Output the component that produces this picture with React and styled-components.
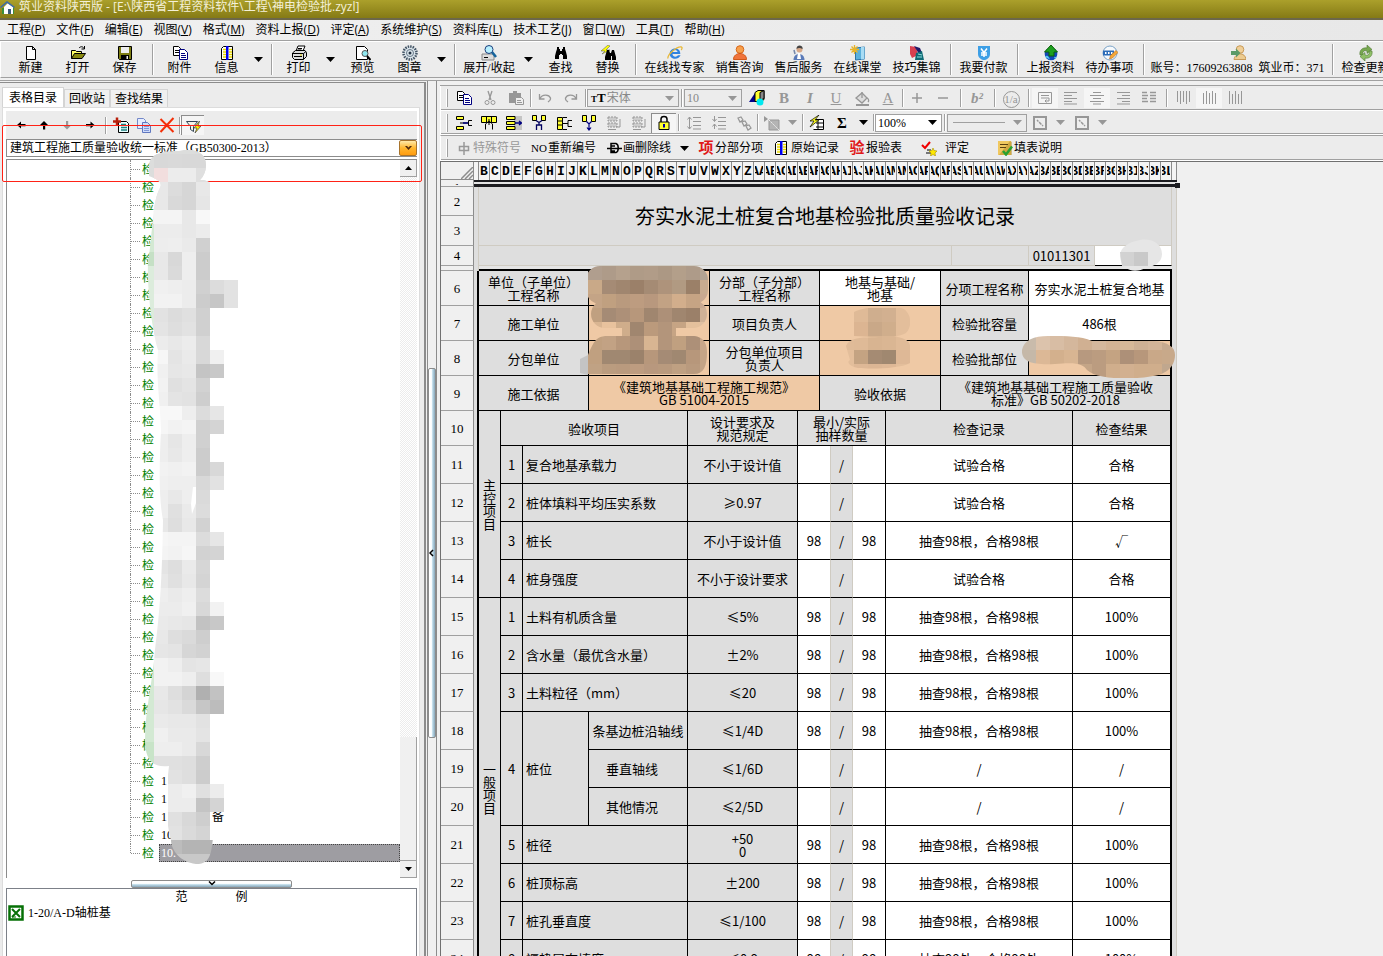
import React from 'react';
import styled, { createGlobalStyle } from 'styled-components';

const GRAY = '#979797';

/* ---------- icons ---------- */

const icons = {
    novo: <path d="M3.5 1.5h6l3 3v10h-9zM9.5 1.5v3h3" fill="#fff" stroke="#000" />,
    abrir: <><path d="M1.5 13.500V5.500h4l1 1h5v3" fill="#ffff66" stroke="#000" /><path d="M1.500 13.500l3-5h11l-3.500 5z" fill="#8a8a10" stroke="#000" /><path d="M9 3c2-2 4-1.500 5 0.500M14.500 1v3h-3" fill="none" stroke="#000" /></>,
    salvar: <><path d="M1.500 1.500h13v13h-12l-1-1z" fill="#7d7d12" stroke="#000" /><path d="M4 2h8v6H4z" fill="#eee" /><path d="M4 10h8v4H4z" fill="#000" /><path d="M9.500 11h1.500v3H9.500z" fill="#eee" /></>,
    anexo: <><path d="M1.500 1.500h5l2 2v7h-7z" fill="#fff" stroke="#000" /><path d="M3 5.500h4M3 7.500h4" stroke="#000" /><path d="M7.500 4.500h5l3 3v7h-8z" fill="#fff" stroke="#000080" /><path d="M9 8.500h4M9 10.500h5M9 12.500h5" stroke="#000080" /></>,
    info: <><path d="M2.500 3.500l2-2h3v13h-5zM8.500 1.500h5v13h-5z" fill="#fff" stroke="#000" /><path d="M4 4.500h3M4 7h3M4 9.500h3M4 12h3M10 4.500h3M10 7h3M10 9.500h3M10 12h3" stroke="#e8d800" strokeWidth="1.500" /><path d="M7 1h2.500v14H7z" fill="#0000f0" /></>,
    imprimir: <><path d="M5 6l2-5h7l-2 5z" fill="#fff" stroke="#000" /><path d="M7 3.500h4M6.500 5h4" stroke="#000" /><path d="M1.500 8l3-2.500h9.500l1.500 2v4l-3 3h-9l-2-2z" fill="#ddd" stroke="#000" /><path d="M1.500 8.500h11l2.500-2M12.500 8.500v6M3 11.500h8" fill="none" stroke="#000" /><path d="M9 10h2" stroke="#e0d000" /></>,
    visualizar: <><path d="M1.500 1.500h8l3 3v10h-11z" fill="#fff" stroke="#000" /><circle cx="10" cy="8.500" r="3" fill="#8fe8f0" stroke="#555" /><path d="M12 11l3.500 4" stroke="#000" strokeWidth="2" /></>,
    carimbo: <><circle cx="8" cy="8" r="6.500" fill="#dce6ec" stroke="#456" strokeWidth="2.500" strokeDasharray="1.500 1" /><circle cx="8" cy="8" r="3.500" fill="none" stroke="#678" /><circle cx="8" cy="8" r="1.500" fill="#234" /></>,
    expandir: <><path d="M1 9h12v6H1z" fill="#ddd" stroke="#888" /><path d="M3 12.500h4" stroke="#000" /><path d="M11 7l4 5" stroke="#14649c" strokeWidth="2.500" /><circle cx="8" cy="4.500" r="4" fill="#b8f0ff" stroke="#1a3f7c" /></>,
    binoculo: <path d="M4 2h2v2h1v2h2V4h1V2h2v2l1 3 1 4v3h-4v-4H9V9H7v1H6v4H2v-3l1-4 1-3z" fill="#000" />,
    trocar: <><path d="M8 0L1 6h4L2 9l8-4H6l4-4z" fill="#ffff00" stroke="#555" strokeWidth=".5" /><path d="M7 5h2l1 3h1l1-3h2l2 7v3h-4v-4h-1v4H5v-3z" fill="#000" /></>,
    ie: <><path d="M13 9H5.500c.2 3 4 3.500 5.500 1.300h2.600C11 16 2.500 14.500 2.700 8.500 3 2 13.500 1.500 13.300 9zM5.600 7h5c-.5-2.700-4.500-2.700-5 0z" fill="#2f83e0" /><path d="M1 13.500C0 10 10 1 14.500 2c1 .3.500 2-.3 3" fill="none" stroke="#e8b838" strokeWidth="1.300" /></>,
    pessoa: <><circle cx="8" cy="4.500" r="3.800" fill="#f7a04c" stroke="#d8681a" /><path d="M1.500 14.500c0-8 13-8 13 0z" fill="#f0743c" stroke="#d05818" /></>,
    atendente: <><path d="M2.500 15c0-8 11-8 11 0z" fill="#5a7ab8" /><path d="M7 8h2l1 6H6z" fill="#fff" /><circle cx="8.500" cy="4.500" r="3" fill="#d8a888" /><path d="M5.500 4c0-5 7-4 6 0-2-1-4-1.500-6 0z" fill="#444" /><path d="M3 5l1 4" stroke="#78a" strokeWidth="1.500" /></>,
    aula: <><path d="M5.500 3l9-1v12l-9 1z" fill="#5ab0dc" stroke="#2872a8" /><path d="M11 2l3.500 0v12l-3.500.5z" fill="#a8dcf4" /><path d="M4.500 0v9M0 4.500h9M1.500 1.500l6 6M7.500 1.500l-6 6" stroke="#e8b428" strokeWidth="1.300" /></>,
    dicas: <><path d="M1 1l6 1 2 8-6 3-2-4z" fill="#d84050" /><path d="M5 1l6 2 2 5-3 1z" fill="#221a68" /><path d="M7 8l6-2 2 9H6z" fill="#0f6a74" /><path d="M9 9l4 1M8 12h5" stroke="#8fe0e0" /></>,
    pagar: <><path d="M2 1h12v8c0 4-4 6-6 6s-6-2-6-6z" fill="#3d9fe6" /><path d="M5 3.500l3 4 3-4M8 7v5M5 8h6M5 10h6" stroke="#fff" strokeWidth="1.500" fill="none" /></>,
    enviar: <><circle cx="8" cy="9" r="6.300" fill="#1448b8" /><path d="M8 0l6.500 7H11v4H6V7H1.500z" fill="#1fa01f" stroke="#0a600a" /><path d="M2 12c2-3 4 0 5 2.500zM11 12h3l-2 2z" fill="#55c8f0" /></>,
    tarefas: <><circle cx="8" cy="8" r="7" fill="#f6f9fc" stroke="#7ca4c8" /><path d="M1 5.500h11v5H1z" fill="#2c6cb8" /><path d="M3 8h1.500M6 8h1.500M9 8h1.500" stroke="#fff" strokeWidth="2" /><path d="M7.500 14l1-3.500 5.500-5 2 2-5.500 5.500z" fill="#f4a838" stroke="#b86818" strokeWidth=".6" /></>,
    conta: <><circle cx="10" cy="4.500" r="3.800" fill="#f0cf98" stroke="#c89a58" /><path d="M4 14.500c1-7 11-8 12 0z" fill="#eccb90" stroke="#c89a58" /><path d="M1 6h5V3.500L10.500 8 6 12.500V10H1z" fill="#5a9a68" /></>,
    atualizar: <><path d="M2 10C1 5 5 2 9 3V0l5 4.500-5 4V6C6 5 4 7 5 10z" fill="#78a850" stroke="#527a38" strokeWidth=".6" /><path d="M14 6c1 5-3 8-7 7v3l-5-4.500 5-4V10c3 1 5-1 4-4z" fill="#90c068" stroke="#527a38" strokeWidth=".6" /></>,

    esquerda: <path d="M4 8l4-3.500V7h4.500v2.200H8v2.300z" fill="#000" />,
    cima: <path d="M8 4l4 4H9.200v4.500H7V8H4z" fill="#000" />,
    baixo: <path d="M8 12.500l4-4H9.200V4H7v4.500H4z" fill="#999" />,
    direita: <path d="M12.500 8l-4-3.500V7H4v2.200h4.500v2.300z" fill="#000" />,
    adicionar: <><path d="M5.500 4.500h8l2 2v9h-10z" fill="#e8ffff" stroke="#000" /><path d="M8 7.500h5M8 10.500h6M8 13h6" stroke="#208080" strokeWidth="1.300" /><path d="M4 .5v8M0 4.500h8" stroke="#b8200c" strokeWidth="2.500" /></>,
    copiarAzul: <><path d="M1.500 1.500h6l2 2v8h-8z" fill="#e4ecff" stroke="#7488c8" /><path d="M6.500 5.500h5l3 3v7h-8z" fill="#d0dcfa" stroke="#6078c0" /><path d="M8 9.500h5M8 11.500h5M8 13.500h5" stroke="#8098d8" /></>,
    excluir: <path d="M1.500 2l13 13M14.500 1L1.500 15" stroke="#f43008" strokeWidth="2" />,
    filtro: <><path d="M1.500 3.500h11l-4 5v5l-3-2v-3z" fill="#f4f4e8" stroke="#345" /><path d="M14.500 3L9 10h3l-2 5 6-7h-3z" fill="#ffee00" stroke="#444" strokeWidth=".7" /></>,
    excel: <><path d="M1.500 1.500h13v13h-13z" fill="#fff" stroke="#067006" strokeWidth="2.500" /><path d="M4 4l8 8M12 4l-8 8" stroke="#067006" strokeWidth="2" /><path d="M4 12h4" stroke="#067006" /></>,

    recortar: <><path d="M6 1l3 9M10 1L7 10" stroke={GRAY} strokeWidth="1.300" /><circle cx="5" cy="12.500" r="2" fill="none" stroke={GRAY} /><circle cx="11" cy="12.500" r="2" fill="none" stroke={GRAY} /></>,
    colar: <><path d="M1 3h12v10H1z" fill={GRAY} /><path d="M5 1h4v3H5z" fill={GRAY} /><path d="M7.500 7.500h6l2 2v5h-8z" fill="#eee" stroke={GRAY} /><path d="M9 10.500h4M9 12.500h5" stroke={GRAY} /></>,
    desfazer: <path d="M2.500 4v5h5M3 8.500C5 4 12 4 13.500 8c.3 1.500-1 3-2.500 4" fill="none" stroke={GRAY} strokeWidth="1.300" />,
    refazer: <path d="M13.500 4v5h-5M13 8.500C11 4 4 4 2.500 8c-.3 1.500 1 3 2.500 4" fill="none" stroke={GRAY} strokeWidth="1.300" />,
    formas: <><path d="M0 12l6-9 2 9z" fill="#00008b" /><path d="M6 2.500l3-2h6v9l-3 2H6z" fill="#ffff30" stroke="#000" /><path d="M11 2.500v8l4-2V.5z" fill="#888" stroke="#000" /><circle cx="11" cy="12" r="3.500" fill="#00e8f0" /></>,
    balde: <><path d="M2 8l6-5 5 5-5 5z" fill="#ddd" stroke={GRAY} strokeWidth="1.300" /><path d="M8 2v6M13 8c2 1 2 3 1 4" fill="none" stroke={GRAY} strokeWidth="1.300" /><path d="M2 15h13" stroke={GRAY} strokeWidth="2" /></>,
    mais: <path d="M3 8h10M8 3v10" stroke={GRAY} strokeWidth="1.500" />,
    menos: <path d="M3 8h10" stroke={GRAY} strokeWidth="1.500" />,
    quebra: <path d="M1.500 2.500h13v11h-13zM4 5.500h8M4 8h8v3H8M9.500 9.500L8 11l1.500 1.500" fill="none" stroke={GRAY} />,
    alinharEsq: <path d="M1 2.500h13M1 5.500h8M1 8.500h13M1 11.500h8M1 14h13" stroke={GRAY} />,
    alinharCentro: <path d="M4 2.500h8M1 5.500h14M4 8.500h8M1 11.500h14M4 14h8" stroke={GRAY} />,
    alinharDir: <path d="M2 2.500h13M7 5.500h8M2 8.500h13M7 11.500h8M2 14h13" stroke={GRAY} />,
    distribuir: <path d="M1 2.500h5M9 2.500h6M1 5.500h6M9 5.500h6M1 8.500h5M9 8.500h6M1 11.500h6M9 11.500h6" stroke={GRAY} strokeWidth="1.500" />,
    barras: <path d="M2.500 1v11M5.500 1v13M8.500 1v11M11.500 1v13M14.500 1v11" stroke={GRAY} />,
    barrasMeio: <path d="M2.500 3v11M5.500 1v13M8.500 3v11M11.500 1v13M14.500 3v11" stroke={GRAY} />,
    barrasBaixo: <path d="M2.500 1v13M5.500 4v10M8.500 1v13M11.500 4v10M14.500 1v13" stroke={GRAY} />,

    linhaInserir: <><path d="M.5 1.500h7v3h-7zM.5 11.500h7v3h-7z" fill="#ffff30" stroke="#000" /><path d="M4 8h8M16 5.500h-3.500v5H16" fill="none" stroke="#000" /><path d="M7 8h5" stroke="#000080" strokeWidth="1.500" /></>,
    tabelaInserir: <><path d="M.5 1.500h15v6H.5z" fill="#ffff30" stroke="#000" /><path d="M5.500 1.500v6M10.500 1.500v6M8 4v6M4.500 14.500V9L8 6l3.500 3v5.500" fill="none" stroke="#000" /></>,
    linhaAdd: <><path d="M8 1h8v14H8z" fill="#c4c4c4" /><path d="M.5 1.500H9v3H.5zM.5 6.500H9v3H.5zM.5 11.500H9v3H.5z" fill="#ffff30" stroke="#000" /><path d="M9 8h6M13 6l2.500 2L13 10" fill="none" stroke="#000080" strokeWidth="1.300" /></>,
    colInserir: <><path d="M1.500.5h4v5h-4zM10.500.5h4v5h-4z" fill="#ffff30" stroke="#000" /><path d="M5 5.500l3 2 3-2M5.500 15v-5h5v5M8 7v3" fill="none" stroke="#000060" strokeWidth="1.300" /></>,
    colTabela: <><path d="M1.500 2.500h5v12h-5z" fill="#ffff30" stroke="#000" /><path d="M1.500 6h5M1.500 10h5M7 8.500h5M16 5.500h-4v6h4M7 2.500h4M7 14.500h4" fill="none" stroke="#000" /></>,
    colAdd: <><path d="M1.500.5h4v6h-4zM10.500.5h4v6h-4z" fill="#ffff30" stroke="#000" /><path d="M5.500 6.500L8 9l2.500-2.500M8 9v6M6 12.500L8 15l2-2.500" fill="none" stroke="#000080" strokeWidth="1.200" /></>,
    linhaDel: <><path d="M2 2h9v4H2zM2 8h9v4H2z" fill="#ccc" stroke={GRAY} strokeDasharray="2 1" /><path d="M14 4v8h-4M2 14.500h8" fill="none" stroke={GRAY} /></>,
    cadeado: <><path d="M5 7V4c0-3.500 6-3.500 6 0v3" fill="none" stroke="#000" strokeWidth="1.500" /><path d="M3 7h10v7.500H3z" fill="#ffff30" stroke="#000" /><path d="M7 9h2v3.500H7z" fill="#0000a0" /></>,
    espacoMais: <path d="M7 2.500h8M7 6.500h8M7 10.500h8M7 14h8M3.500 2v12M1.500 4.500l2-2.500 2 2.500M1.500 11.500l2 2.500 2-2.500" fill="none" stroke={GRAY} />,
    espacoMenos: <path d="M7 2.500h8M7 6.500h8M7 10.500h8M7 14h8M3.500 1v5M3.500 9v5M1.500 4l2 2.500L5.500 4M1.500 11.500l2-2.500 2 2.500" fill="none" stroke={GRAY} />,
    corrente: <path d="M2 3l3-1 2 3-3 2zM6 7l3-1 2 3-3 2zM10 11l3-1 2 3-3 2z" fill="none" stroke={GRAY} strokeWidth="1.200" />,
    padrao: <><path d="M0 1l4 3-4 3z" fill={GRAY} /><path d="M5 5h10v10H5z" fill="#b4b4b4" stroke={GRAY} /><path d="M5 5l10 10" stroke="#eee" strokeDasharray="2 1" /></>,
    formulario: <><path d="M6.500 4.500h8v10h-10" fill="#fff" stroke="#000" /><path d="M8 7h2v2H8zM8 11h2v2H8zM11 8h3M11 12h3" fill="none" stroke="#000" /><path d="M10 0L1 6h4l-4 6 9-7H6z" fill="#ffff20" stroke="#000" strokeWidth=".7" /></>,
    quadro: <><path d="M2 2h12v12H2z" fill="#eee" stroke={GRAY} strokeWidth="2" /><path d="M5 5l3 3M8 8l3 3" stroke={GRAY} strokeWidth="1.500" strokeDasharray="2 1" /></>,
    simbolo: <path d="M8 2v13M3.500 6.500h9v4h-9z" fill="none" stroke="#999" strokeWidth="1.500" />,
    riscar: <path d="M1 8.500h15M5 3.500h5c3 1 3 8 0 9H5zM5 6h4M5 11h4" fill="none" stroke="#000" strokeWidth="1.500" />,
    avaliar: <><path d="M1 5l3 3 5-6" fill="none" stroke="#f00000" strokeWidth="2" /><path d="M6 10h4M5 13h5" stroke="#000" /><path d="M12 8l1 2.500 3 .5-2 2 .5 3-2.500-1.500L9.500 16l.5-3-2-2 3-.5z" fill="#ffe800" stroke="#a89000" strokeWidth=".6" /></>,
    explicacao: <><path d="M1 1h13v14H1z" fill="#f0c860" /><path d="M13 1l2 1v13H2z" fill="#b08820" opacity=".5" /><path d="M3 4.500h8M3 7.500h6" stroke="#5a4010" /><path d="M6 11l3 3.500 6-8" fill="none" stroke="#28a030" strokeWidth="2.500" /></>,
    casa: <><path d="M2 8h12v6H2z" fill="#3a9038" /><path d="M4 7l4-4 5 4v7H4z" fill="#fff" /><path d="M0 7l7-6 8 6-1 1-7-5-6 5z" fill="#3c6ca8" /><path d="M8 9h3v5H8z" fill="#3a5a78" /></>,
};

const Icon = ({ name, size = 16 }) => (
    <svg width={size} height={size} viewBox="0 0 16 16" aria-hidden="true">{icons[name]}</svg>
);

const Seta = ({ color = '#000' }) => (
    <svg width="9" height="5" viewBox="0 0 9 5" aria-hidden="true"><path d="M0 0h9L4.500 5z" fill={color} /></svg>
);

/* ---------- data ---------- */

const menus = [['工程', 'P'], ['文件', 'F'], ['编辑', 'E'], ['视图', 'V'], ['格式', 'M'], ['资料上报', 'D'], ['评定', 'A'], ['系统维护', 'S'], ['资料库', 'L'], ['技术工艺', 'J'], ['窗口', 'W'], ['工具', 'T'], ['帮助', 'H']];

const principal = [
    ['novo', '新建', 47], ['abrir', '打开', 47], ['salvar', '保存', 47], '|',
    ['anexo', '附件', 47], ['info', '信息', 47], 'v', '|',
    ['imprimir', '打印', 47], 'v', ['visualizar', '预览', 47], ['carimbo', '图章', 47], 'v', '|',
    ['expandir', '展开/收起', 62], 'v', ['binoculo', '查找', 47], ['trocar', '替换', 47], '|',
    ['ie', '在线找专家', 71], ['pessoa', '销售咨询', 59], ['atendente', '售后服务', 59], ['aula', '在线课堂', 59], ['dicas', '技巧集锦', 59], '|',
    ['pagar', '我要付款', 59], '|',
    ['enviar', '上报资料', 59], ['tarefas', '待办事项', 59], '|',
    ['conta', '账号：17609263808  筑业币：371', 181], '|',
    ['atualizar', '检查更新', 59],
];

const colunas = Array.from({ length: 63 }, (_, i) => {
    const n = i + 1;
    return n < 26 ? String.fromCharCode(65 + n) : String.fromCharCode(64 + Math.floor(n / 26)) + String.fromCharCode(65 + (n % 26));
});

const CINZA = '#dedede';
const LARANJA = '#efc9a5';
const BRANCO = '#fff';

const c = (t, span, bg = CINZA, extra = {}) => ({ t, span, bg, ...extra });
const amostra = (v) => [
    c(v, 3, BRANCO, { right: 'tan' }),
    c('/', 2, CINZA, { right: 'tan' }),
    c(v, 3, BRANCO),
];
const item = (n, h, numero, nome, req, v, registro, resultado, antes = []) => ({
    n, h,
    cells: [...antes, c(numero, 2), c(nome, 15, CINZA, { left: true }), c(req, 10), ...amostra(v), c(registro, 17, BRANCO), c(resultado, 9, BRANCO)],
});
const REG = '抽查98根，合格98根';

const linhas = [
    { n: 6, h: 35, cells: [c('单位（子单位）\n工程名称', 10), c('', 11, LARANJA), c('分部（子分部）\n工程名称', 10), c('地基与基础/\n地基', 11, BRANCO), c('分项工程名称', 8), c('夯实水泥土桩复合地基', 13, BRANCO)] },
    { n: 7, h: 35, cells: [c('施工单位', 10), c('', 11, LARANJA), c('项目负责人', 10), c('', 11, LARANJA), c('检验批容量', 8), c('486根', 13, BRANCO)] },
    { n: 8, h: 35, cells: [c('分包单位', 10), c('', 11, LARANJA), c('分包单位项目\n负责人', 10), c('', 11, LARANJA), c('检验批部位', 8), c('', 13, LARANJA)] },
    { n: 9, h: 35, cells: [c('施工依据', 10), c('《建筑地基基础工程施工规范》\nGB 51004-2015', 21, LARANJA), c('验收依据', 11), c('《建筑地基基础工程施工质量验收\n标准》GB 50202-2018', 21)] },
    { n: 10, h: 35, cells: [c('主\n控\n项\n目', 2, CINZA, { rows: 5 }), c('验收项目', 17), c('设计要求及\n规范规定', 10), c('最小/实际\n抽样数量', 8), c('检查记录', 17), c('检查结果', 9)] },
    item(11, 38, '1', '复合地基承载力', '不小于设计值', '', '试验合格', '合格'),
    item(12, 38, '2', '桩体填料平均压实系数', '≥0.97', '', '试验合格', '合格'),
    item(13, 38, '3', '桩长', '不小于设计值', '98', REG, '√'),
    item(14, 38, '4', '桩身强度', '不小于设计要求', '', '试验合格', '合格'),
    item(15, 38, '1', '土料有机质含量', '≤5%', '98', REG, '100%', [c('一\n般\n项\n目', 2, CINZA, { rows: 10 })]),
    item(16, 38, '2', '含水量（最优含水量）', '±2%', '98', REG, '100%'),
    item(17, 38, '3', '土料粒径（mm）', '≤20', '98', REG, '100%'),
    { n: 18, h: 38, cells: [c('4', 2, CINZA, { rows: 3 }), c('桩位', 6, CINZA, { rows: 3, left: true }), c('条基边桩沿轴线', 9), c('≤1/4D', 10), ...amostra('98'), c(REG, 17, BRANCO), c('100%', 9, BRANCO)] },
    { n: 19, h: 38, cells: [c('垂直轴线', 9, CINZA, { recuo: true }), c('≤1/6D', 10), ...amostra(''), c('/', 17, BRANCO), c('/', 9, BRANCO)] },
    { n: 20, h: 38, cells: [c('其他情况', 9, CINZA, { recuo: true }), c('≤2/5D', 10), ...amostra(''), c('/', 17, BRANCO), c('/', 9, BRANCO)] },
    item(21, 38, '5', '桩径', '+50\n0', '98', REG, '100%'),
    item(22, 38, '6', '桩顶标高', '±200', '98', REG, '100%'),
    item(23, 38, '7', '桩孔垂直度', '≤1/100', '98', REG, '100%'),
    item(24, 38, '8', '褥垫层夯填度', '≤0.9', '98', '抽查98处，合格98处', '100%'),
];

const arvore = Array.from({ length: 39 }, (_, i) => {
    if (i < 34) return '';
    return ['1', '1', '1               备', '10', '10.'][i - 34];
});

// tons de cinza dos blocos da máscara, 14px cada, a partir de x=154 y=154
const blocosArvore = [
    'd8d9d8d8', 'efececdfe2', 'e8dcd6e8', 'e8d9d6e6', 'f4f4e8f8', 'ececE8ec', 'edeeead0', 'e8d8eecc', 'e8daeecc',
    'f0eeecd0dce2', 'f2f2ecccc6e2', 'e2dce0d0', 'e4dee2d0', 'ece8ecd8', 'f6e4ead8f0', 'f0e6e8c4c8',
    'f2e0e4d2', 'f0e4e2ce', 'f8f8eedce6', 'f6f2f4d0d4', 'eee6eed0', 'eee8eecc', 'f2f0f2ccd8', 'f0eeeed8e2',
    'eee8eeda', 'eee0eadc', 'e8dee8d2', 'f6f4f4dce6', 'f4f2f6d2d4', 'e4deead6', 'e8e0e8d4', 'eeeaeedc',
    'ececf0d8f2', 'eae8e6c2c8', 'e8dedace', 'e6e4d6d2', 'f2eee4e6', 'f2f2eedef8', 'e8ded4b0c2', 'e6e2dac6bc',
    'eae8e8e2', 'f0eaeae4', 'eeeeead8', 'e0e0dece', 'ffe2decc', 'ffecf0e0ec', 'ffececc4d4', 'ffe0d8ceff', 'ffe2dad4', 'ffbcb4b4b4', 'ffc8c8c8c8',
];

const blocosFolha = [
    [588, 266, ['b09e8e', 'ae9b89', 'b5a18d', 'af9b87', 'b19c88', 'ac9884', 'b39f8a', 'ae9b89', 'b3a392']],
    [588, 280, ['c9a988', 'a58b75', 'a0866f', '9b8069', 'a58b74', 'ae937b', 'b19a82', '9b8068', 'c8ab90']],
    [588, 294, ['c4a486', 'c0a080', 'b99a7e', 'bd9c80', 'b8987e', 'c2a284', 'd2ae8c', 'c6a484', 'c8a890']],
    [588, 308, ['c0a080', 'a58b75', 'ad9078', 'b7977b', 'a0866f', 'ad9078', 'a0866f', '9b8069', 'cfb196']],
    [588, 322, ['d9b592', 'e8c29d', 'cfad8b', 'a0866f', 'bb9a7c', 'b3957b', 'c6a484', 'e4c09c', 'dfc0a2']],
    [588, 336, ['c0a080', 'c2a284', 'b7977b', 'ad9078', 'd8b592', 'b3957b', 'c0a080', 'ad9078', 'c8a68a']],
    [588, 350, ['c0a080', 'a08871', 'a08871', '9b826b', 'b7977b', 'a58b75', 'a08871', 'b7977b', 'c4a486']],
    [588, 364, ['c0a284', 'ba9c7f', 'b99a7e', 'bd9c80', 'b8987e', 'b99a7e', 'bfa082', 'b99a7e', 'c4a486']],
    [840, 308, ['e6c19d', 'dfba97', 'cfae8e', 'd2b090', 'e3be9b']],
    [840, 322, ['e6c19d', 'dcb592', 'c9a888', 'd0ae8c', 'e3be9b']],
    [840, 336, ['e0bb98', 'dfba97', 'd8b491', 'dab693', 'e0bb98']],
    [840, 350, ['e3be9b', 'c4a382', 'a58b73', 'a08870', 'deb896']],
    [840, 364, ['e3be9b', 'deb896', 'dcb694', 'deb896', 'e3be9b']],
    [1022, 336, ['c9bbab', 'dcc3ac', 'd8bda4', 'd4b79c', 'd0b092', 'd4b79c', 'd2b294', 'd6b898', 'cdb094', 'd2b498', 'c6aa90']],
    [1022, 350, ['c5b8a8', 'dcb896', 'd3b08d', 'd8b592', 'b7997f', 'bb9c80', 'c4a382', 'ad9078', 'b7977b', 'c9a888', 'c8a98a']],
    [1022, 364, ['c9bbab', 'dcb896', 'd3b08d', 'd8b592', 'c4a587', 'bb9c80', 'd0ae8c', 'd2b090', 'd0ae8c', 'd0ae8c', 'c0a78e']],
];

/* ---------- parts ---------- */

function MascaraArvore() {
    return (
        <CamadaArvore width="100" height="716" viewBox="140 150 100 716" aria-hidden="true">
            <clipPath id="contornoArvore">
                <path d="M149 165c1-12 15-14 30-14 14-4 27 1 27 14 0 7-3 12-6 15 6 0 10 2 10 4H240V830H214L212 846C210 862 204 864 196 864 180 862 171 850 171 840 165 820 166 790 169 766 155 768 145 762 145 740 145 710 153 680 155 650 160 610 162 580 163 520 159 500 159 470 161 430 160 400 156 380 158 350 152 330 147 290 148 262 153 235 152 205 159 190 164 182 158 180 149 176 149 165z" />
            </clipPath>
            <g clipPath="url(#contornoArvore)">
                <rect x="140" y="150" width="70" height="60" fill="#dcdddc" />
                <rect x="140" y="182" width="70" height="30" fill="#ececec" />
                <rect x="140" y="210" width="14" height="40" fill="#f0f0f0" />
                <rect x="140" y="224" width="14" height="42" fill="#d3e9d3" />
                <rect x="140" y="252" width="14" height="14" fill="#c5e0c5" />
                <rect x="140" y="266" width="14" height="64" fill="#dcecdc" />
                <rect x="140" y="660" width="14" height="82" fill="#d3e9d3" />
                <rect x="140" y="742" width="14" height="30" fill="#c8e4c8" />
                {blocosArvore.map((linha, y) => linha.match(/../g).map((tom, x) => (
                    tom !== 'ff' && <rect key={`${x}-${y}`} x={154 + x * 14} y={154 + y * 14} width="14" height="14" fill={`#${tom}${tom}${tom}`} />
                )))}
                <rect x="154" y="168" width="14" height="14" fill="#f2dede" />
                <path d="M193 487h3v16l-4 11-1-10z" fill="#fff" />
            </g>
        </CamadaArvore>
    );
}

function MascaraFolha() {
    return (
        <CamadaFolha width="600" height="144" viewBox="580 236 600 144" aria-hidden="true">
            <clipPath id="contornoFolha">
                <rect x="586" y="266" width="122" height="38" rx="14" />
                <rect x="591" y="300" width="116" height="28" rx="14" />
                <rect x="622" y="318" width="54" height="22" />
                <path d="M588 374c-4-8-2-16 4-28 4-8 8-10 16-10h84c12 0 15 8 15 16 0 14-3 22-13 22z" />
                <path d="M854 312c10-6 40-8 50-3 8 6 8 18 2 24-10 6-30 4-52 3z" />
                <path d="M846 346c4-10 20-8 34-9 16-2 28 1 30 8l2 4-2 14c-10 6-40 6-52 5-8-1-12-6-8-8z" />
                <path d="M1022 350c2-10 12-14 26-14 20 0 32 0 44 5h62c14 1 21 6 21 14 0 12-10 20-22 21-18 4-56 4-66-6-4-6-10-8-32-6-20 1-34-1-33-14z" />
            </clipPath>
            <path d="M578 360l10-5v20l-8-2z" fill="#c4c4c4" />
            <g clipPath="url(#contornoFolha)">
                {blocosFolha.map(([x0, y, cores]) => cores.map((cor, i) => (
                    <rect key={`${x0}-${y}-${i}`} x={x0 + i * 14} y={y} width="14" height="14" fill={`#${cor}`} />
                )))}
            </g>
            <path d="M1120 256c0-9 9-14 20-16 12-2 22 4 22 14 0 9-8 12-16 14-10 5-25 4-26-12z" fill="#e6e6e6" />
            <path d="M1120 252h14v14h-12z" fill="#d2d2d2" />
            <path d="M1134 252h14v14h-14z" fill="#c9c9c9" />
        </CamadaFolha>
    );
}

function BarraPrincipal() {
    return (
        <PrincipalBar>
            {principal.map((b, i) => {
                if (b === '|') return <Divisor key={i} $h={31} />;
                if (b === 'v') return <SetaButton key={i} aria-label="更多"><Seta /></SetaButton>;
                return <PrincipalButton key={i} $w={b[2]}><Icon name={b[0]} />{b[1]}</PrincipalButton>;
            })}
        </PrincipalBar>
    );
}

const Botoes = ({ nomes, w = 26, marcados = [] }) => nomes.map((n) => (
    <FerramentaButton key={n} $w={w} $marcado={marcados.includes(n)} aria-label={n}><Icon name={n} /></FerramentaButton>
));

function Ferramentas() {
    return (
        <>
            <FerramentasRow $h={25}>
                <Alca />
                <Botoes nomes={['anexo', 'recortar', 'colar']} />
                <Divisor $h={18} $m={1} />
                <Botoes nomes={['desfazer', 'refazer']} />
                <Divisor $h={18} $m={1} />
                <Combo $w={92} $off>
                    <TT><b>T</b><b>T</b></TT>
                    <select aria-label="字体" disabled><option>宋体</option></select>
                    <Seta color={GRAY} />
                </Combo>
                <Divisor $h={18} $m={2} />
                <Combo $w={58} $off>
                    <select aria-label="字号" disabled><option>10</option></select>
                    <Seta color={GRAY} />
                </Combo>
                <Botoes nomes={['formas']} w={29} />
                <LetraButton><b>B</b></LetraButton>
                <LetraButton><i><b>I</b></i></LetraButton>
                <LetraButton><u>U</u></LetraButton>
                <Botoes nomes={['balde']} />
                <LetraButton><u>A</u></LetraButton>
                <Divisor $h={18} $m={1} />
                <Botoes nomes={['mais', 'menos']} />
                <Divisor $h={18} />
                <LetraButton><i><b>b²</b></i></LetraButton>
                <Divisor $h={18} />
                <LetraButton><Redondo>1/a</Redondo></LetraButton>
                <Divisor $h={18} />
                <Botoes nomes={['quebra', 'alinharEsq', 'alinharCentro', 'alinharDir', 'distribuir']} marcados={['quebra', 'alinharCentro']} />
                <Divisor $h={18} />
                <Botoes nomes={['barras', 'barrasMeio', 'barrasBaixo']} marcados={['barrasMeio']} />
            </FerramentasRow>
            <FerramentasRow $h={24}>
                <Alca />
                <Botoes w={25} nomes={['linhaInserir', 'tabelaInserir', 'linhaAdd', 'colInserir', 'colTabela', 'colAdd']} />
                <FerramentaButton $w={25} aria-label="删除行"><Icon name="linhaDel" /></FerramentaButton>
                <FerramentaButton $w={25} aria-label="删除列"><Icon name="linhaDel" /></FerramentaButton>
                <FerramentaButton $w={25} $preso aria-label="锁定"><Icon name="cadeado" /></FerramentaButton>
                <Divisor $h={17} $m={2} />
                <Botoes w={25} nomes={['espacoMais', 'espacoMenos', 'corrente']} />
                <Divisor $h={17} $m={1} />
                <Botoes w={25} nomes={['padrao']} />
                <SetaButton aria-label="图案"><Seta color={GRAY} /></SetaButton>
                <Divisor $h={17} $m={1} />
                <Botoes w={25} nomes={['formulario']} />
                <LetraButton $preto><b>Σ</b></LetraButton>
                <SetaButton aria-label="求和"><Seta /></SetaButton>
                <Divisor $h={17} $m={1} />
                <Combo $w={67}>
                    <select aria-label="缩放"><option>100%</option></select>
                    <Seta />
                </Combo>
                <Divisor $h={17} $m={2} />
                <Combo $w={80} $off>
                    <Traco />
                    <Seta color={GRAY} />
                </Combo>
                <Botoes w={25} nomes={['quadro']} />
                <SetaButton aria-label="边框"><Seta color={GRAY} /></SetaButton>
                <Botoes w={25} nomes={['quadro']} />
                <SetaButton aria-label="斜线"><Seta color={GRAY} /></SetaButton>
            </FerramentasRow>
            <FerramentasRow $h={26} $topo>
                <Alca />
                <TextoButton $off><Icon name="simbolo" />特殊符号</TextoButton>
                <TextoButton><NoMark>NO</NoMark>重新编号</TextoButton>
                <TextoButton><Icon name="riscar" />画删除线</TextoButton>
                <SetaButton aria-label="删除线样式"><Seta /></SetaButton>
                <TextoButton><Vermelho>项</Vermelho>分部分项</TextoButton>
                <TextoButton $gap={2}><Icon name="info" />原始记录</TextoButton>
                <TextoButton><Vermelho>验</Vermelho>报验表</TextoButton>
                <TextoButton $gap={8} $pad={14}><Icon name="avaliar" />评定</TextoButton>
                <TextoButton $pad={14}><Icon name="explicacao" />填表说明</TextoButton>
            </FerramentasRow>
        </>
    );
}

function PainelEsquerdo() {
    return (
        <Esquerda>
            <Abas role="tablist">
                <Aba role="tab" $ativa>表格目录</Aba>
                <Aba role="tab">回收站</Aba>
                <Aba role="tab">查找结果</Aba>
            </Abas>
            <Corpo>
                <BarraArvore>
                    <Botoes w={23} nomes={['esquerda', 'cima', 'baixo', 'direita']} />
                    <Divisor $h={17} />
                    <Botoes w={23} nomes={['adicionar', 'copiarAzul', 'excluir']} />
                    <Divisor $h={17} $m={1} />
                    <FerramentaButton $w={23} $preso aria-label="筛选"><Icon name="filtro" /></FerramentaButton>
                </BarraArvore>
                <Norma>
                    <select aria-label="标准"><option>建筑工程施工质量验收统一标准（GB50300-2013）</option></select>
                    <NormaSeta aria-hidden="true">
                        <svg width="7" height="4" viewBox="0 0 7 4"><path d="M0 0h2l1.500 1.500L5 0h2L3.500 4z" fill="#50280a" /></svg>
                    </NormaSeta>
                </Norma>
                <Lista>
                    <Nos>
                        {arvore.map((texto, i) => (
                            <No key={i}>
                                <Ramo $ultimo={i === arvore.length - 1} />
                                <Marca>检</Marca>
                                <Rotulo $sel={i === arvore.length - 1}>{texto}</Rotulo>
                            </No>
                        ))}
                    </Nos>
                    <Rolagem>
                        <RolagemButton aria-label="向上"><svg width="7" height="4" viewBox="0 0 7 4"><path d="M0 4h7L3.500 0z" /></svg></RolagemButton>
                        <RolagemThumb />
                        <RolagemButton aria-label="向下"><svg width="7" height="4" viewBox="0 0 7 4"><path d="M0 0h7L3.500 4z" /></svg></RolagemButton>
                    </Rolagem>
                </Lista>
                <DivisorHorizontal>
                    <button aria-label="折叠范例"><svg width="8" height="5" viewBox="0 0 8 5"><path d="M1 .5l3 3 3-3" fill="none" stroke="#000" strokeWidth="1.500" /></svg></button>
                </DivisorHorizontal>
                <Exemplos>
                    <ExemplosTitulo><span>范</span><span>例</span></ExemplosTitulo>
                    <Exemplo><Icon name="excel" />1-20/A-D轴桩基</Exemplo>
                </Exemplos>
            </Corpo>
            <Destaque />
            <MascaraArvore />
        </Esquerda>
    );
}

function Planilha() {
    return (
        <FolhaArea>
            <Folha>
                <colgroup>
                    <col width="33" />
                    <col width="5" />
                    {colunas.map((n) => <col key={n} width="11" />)}
                    <col width="5" />
                </colgroup>
                <thead>
                    <Linha $h={18}>
                        <Canto>
                            <svg width="12" height="12" viewBox="0 0 12 12" aria-hidden="true"><path d="M0 12L12 0M4 12l8-8M8 12l4-4" stroke="#8c8c8c" strokeWidth="1.500" /></svg>
                        </Canto>
                        <ColHead />
                        {colunas.map((n) => <ColHead key={n}><span>{n}</span></ColHead>)}
                        <ColHead />
                    </Linha>
                </thead>
                <tbody>
                    <Linha $h={7}>
                        <RowHead><Recorte $h={4}>1</Recorte></RowHead>
                        <Selecao colSpan={65}><Puxador /></Selecao>
                    </Linha>
                    <Linha $h={29}>
                        <RowHead>2</RowHead>
                        <Borda $tan />
                        <Titulo colSpan={63} rowSpan={2}>夯实水泥土桩复合地基检验批质量验收记录</Titulo>
                        <Borda $tan />
                    </Linha>
                    <Linha $h={30}>
                        <RowHead>3</RowHead>
                        <Borda $tan />
                        <Borda $tan />
                    </Linha>
                    <Linha $h={20}>
                        <RowHead>4</RowHead>
                        <Borda $tan />
                        <Celula colSpan={43} $bg={CINZA} $right="tan" $bottom="tan" />
                        <Celula colSpan={7} $bg={CINZA} $right="tan" $bottom="tan" />
                        <Celula colSpan={6} $bg={CINZA} $right="tan" $bottom="tan">01011301</Celula>
                        <Celula colSpan={7} $bg={BRANCO} $right="tan" />
                        <Borda $tan />
                    </Linha>
                    <Linha $h={5}>
                        <RowHead><Recorte $h={3}>5</Recorte></RowHead>
                        <Borda $tan />
                        <Topo colSpan={63} />
                        <Borda $tan />
                    </Linha>
                    {linhas.map((l) => (
                        <Linha key={l.n} $h={l.h}>
                            <RowHead>{l.n}</RowHead>
                            <Borda />
                            {l.cells.map((x, i) => (
                                <Celula
                                    key={i}
                                    colSpan={x.span}
                                    rowSpan={x.rows}
                                    $bg={x.bg}
                                    $right={i === l.cells.length - 1 ? 'grossa' : x.right}
                                    $left={x.left}
                                    $recuo={x.recuo}
                                >
                                    {x.t}
                                </Celula>
                            ))}
                            <Borda $tan />
                        </Linha>
                    ))}
                </tbody>
            </Folha>
            <MascaraFolha />
        </FolhaArea>
    );
}

export default function App() {
    return (
        <Pagina>
            <GlobalStyle />
            <TituloBar><Icon name="casa" />筑业资料陕西版 - [E:\陕西省工程资料软件\工程\神电检验批.zyzl]</TituloBar>
            <MenuBar>
                {menus.map(([nome, tecla]) => <MenuButton key={tecla}>{nome}(<u>{tecla}</u>)</MenuButton>)}
            </MenuBar>
            <BarraPrincipal />
            <Area>
                <PainelEsquerdo />
                <DivisorVertical>
                    <button aria-label="折叠目录"><svg width="5" height="8" viewBox="0 0 5 8"><path d="M4 1L1 4l3 3" fill="none" stroke="#000" strokeWidth="1.500" /></svg></button>
                </DivisorVertical>
                <Direita>
                    <Ferramentas />
                    <Planilha />
                </Direita>
            </Area>
        </Pagina>
    );
}

/* ---------- styles ---------- */

const GlobalStyle = createGlobalStyle`
    * {
        box-sizing: border-box;
    }

    body {
        margin: 0;
        overflow: hidden;
        background: #f0f0f0;
    }

    body, button, select {
        font-family: "Liberation Serif", "Noto Sans CJK SC", serif;
        font-size: 12px;
        line-height: 14px;
        color: #000;
    }

    button {
        padding: 0;
        border: none;
        background: none;
        white-space: nowrap;
    }

    svg {
        flex: none;
        display: block;
    }
`;

const Pagina = styled.div`
    height: 100vh;
    display: flex;
    flex-direction: column;
    overflow: hidden;
`;

const TituloBar = styled.header`
    flex: none;
    height: 20px;
    display: flex;
    align-items: flex-start;
    gap: 3px;
    white-space: nowrap;
    font-family: "Open Sans", "Noto Sans CJK SC", sans-serif;
    color: #f4f0d8;
    background: linear-gradient(#aba02b, #857a15);
    border-bottom: 2px solid #6c674a;
`;

const MenuBar = styled.nav`
    flex: none;
    height: 21px;
    display: flex;
    padding-left: 2px;
    background: linear-gradient(to right, #f0f0f0, #e8e8e8);
    border-bottom: 1px solid #a0a0a0;
`;

const MenuButton = styled.button`
    padding: 0 6px 0 5px;
    font-family: "Open Sans", "Noto Sans CJK SC", sans-serif;
`;

const PrincipalBar = styled.div`
    flex: none;
    height: 37px;
    display: flex;
    align-items: center;
    padding-left: 6px;
    overflow: hidden;
    background: #ececec;
    border-top: 1px solid #fff;
    border-bottom: 1px solid #a0a0a0;
    border-left: 1px solid #fff;
`;

const PrincipalButton = styled.button`
    flex: none;
    width: ${({ $w }) => $w}px;
    display: flex;
    flex-direction: column;
    align-items: center;
    white-space: pre;
`;

const SetaButton = styled.button`
    flex: none;
    width: 17px;
    display: flex;
    justify-content: center;
`;

const Divisor = styled.span`
    flex: none;
    width: 1px;
    height: ${({ $h }) => $h}px;
    margin: 0 3px 0 ${({ $m = 4 }) => $m}px;
    ${({ $m }) => $m && `margin-right: ${$m}px;`}
    background: #a0a0a0;
    box-shadow: 1px 0 #fff;
`;

const Area = styled.main`
    flex: 1;
    min-height: 0;
    display: flex;
    margin-top: 2px;
    border-top: 1px solid #a0a0a0;
    background: #f0f0f0;
`;

const Esquerda = styled.aside`
    position: relative;
    flex: none;
    width: 426px;
    margin-top: 1px;
    padding: 4px 4px 0 2px;
    display: flex;
    flex-direction: column;
    border-top: 1px solid #8c8c8c;
    border-right: 2px solid #8c8c8c;
    background: #ececec;
`;

const Abas = styled.div`
    flex: none;
    height: 20px;
    display: flex;
    align-items: flex-end;
`;

const Aba = styled.button`
    height: ${({ $ativa }) => ($ativa ? 20 : 18)}px;
    padding: 0 ${({ $ativa }) => ($ativa ? 6 : 4)}px;
    border: 1px solid #d4d4d4;
    border-bottom: none;
    background: ${({ $ativa }) => ($ativa ? '#fff' : '#f0f0f0')};
`;

const Corpo = styled.div`
    flex: 1;
    min-height: 0;
    display: flex;
    flex-direction: column;
    padding: 3px 2px 0 3px;
    border: 1px solid #dcdcdc;
    border-bottom: none;
    background: #fff;
`;

const BarraArvore = styled.div`
    flex: none;
    height: 28px;
    display: flex;
    align-items: center;
    padding-left: 3px;
    background: #ececec;
`;

const Norma = styled.div`
    flex: none;
    height: 18px;
    margin-bottom: 2px;
    display: flex;
    border: 1px solid #8c8c8c;
    border-right: none;
    background: #fff;

    select {
        flex: 1;
        min-width: 0;
        padding: 0 3px;
        border: none;
        appearance: none;
        background: #fff;
    }
`;

const NormaSeta = styled.span`
    width: 18px;
    display: flex;
    align-items: center;
    justify-content: center;
    border: 1px solid #a8742c;
    border-radius: 2px;
    background: linear-gradient(#ffe9a8, #ffb62e 50%, #ff9c10);
`;

const Lista = styled.div`
    flex: 1;
    min-height: 0;
    display: flex;
    border-top: 1px solid #8c8c8c;
    border-left: 1px solid #8c8c8c;
`;

const Nos = styled.ul`
    flex: 1;
    margin: 0;
    padding: 0;
    list-style: none;
    overflow: hidden;
`;

const No = styled.li`
    height: 18px;
    display: flex;
    align-items: center;
`;

const Ramo = styled.span`
    width: 10px;
    height: ${({ $ultimo }) => ($ultimo ? 9 : 18)}px;
    align-self: flex-start;
    margin-left: 123px;
    border-left: 1px dotted #8c8c8c;

    &::before {
        content: "";
        display: block;
        height: 9px;
        border-bottom: 1px dotted #8c8c8c;
    }
`;

const Marca = styled.span`
    width: 19px;
    padding: 2px 0 0 2px;
    color: #008000;
`;

const Rotulo = styled.span`
    flex: 1;
    height: 18px;
    padding-left: 1px;
    line-height: 16px;
    white-space: pre;
    border: 1px ${({ $sel }) => ($sel ? 'dotted #444' : 'solid transparent')};
    background: ${({ $sel }) => ($sel ? '#9e9da2' : 'none')};
    color: ${({ $sel }) => ($sel ? '#fff' : '#000')};
`;

const Rolagem = styled.div`
    width: 17px;
    display: flex;
    flex-direction: column;
    justify-content: space-between;
    background: repeating-conic-gradient(#ececec 0 25%, #fff 0 50%) 0 0 / 2px 2px;
`;

const RolagemButton = styled.button`
    height: 17px;
    display: flex;
    align-items: center;
    justify-content: center;
    border-right: 1px solid #a0a0a0;
    border-bottom: 1px solid #a0a0a0;
    background: #f0f0f0;
`;

const RolagemThumb = styled.div`
    height: 124px;
    margin-top: auto;
    border-right: 1px solid #a0a0a0;
    border-bottom: 1px solid #a0a0a0;
    background: #f0f0f0;
`;

const DivisorHorizontal = styled.div`
    flex: none;
    height: 10px;
    display: flex;
    justify-content: center;
    align-items: flex-end;

    button {
        width: 161px;
        height: 8px;
        display: flex;
        justify-content: center;
        border: 1px solid #8c8c8c;
        border-radius: 2px;
        background: linear-gradient(#fff 40%, #bfdcea 60%, #87a5b8);
    }
`;

const Exemplos = styled.section`
    flex: none;
    height: 68px;
    border-top: 1px solid #7c8088;
    border-left: 1px solid #7c8088;
    border-right: 1px solid #7c8088;
`;

const ExemplosTitulo = styled.div`
    display: flex;
    justify-content: center;
    gap: 48px;
    line-height: 16px;
`;

const Exemplo = styled.div`
    display: flex;
    align-items: center;
    gap: 4px;
    height: 16px;
    padding-left: 1px;
`;

const Destaque = styled.div`
    position: absolute;
    left: 2px;
    top: 42px;
    width: 420px;
    height: 57px;
    border: 1px solid #ff2216;
    border-radius: 2px;
    pointer-events: none;
`;

const CamadaArvore = styled.svg`
    position: absolute;
    left: 140px;
    top: 67px;
    pointer-events: none;
`;

const DivisorVertical = styled.div`
    flex: none;
    width: 10px;
    margin: 0 3px 0 1px;
    border-left: 1px solid #8c8c8c;
    border-right: 1px solid #8c8c8c;

    button {
        width: 8px;
        height: 370px;
        margin-top: 287px;
        display: flex;
        align-items: center;
        border: 1px solid #8c8c8c;
        border-radius: 2px;
        background: linear-gradient(to right, #fff 40%, #bfdcea 60%, #87a5b8);
    }
`;

const Direita = styled.section`
    flex: 1;
    min-width: 0;
    margin-top: 4px;
    display: flex;
    flex-direction: column;
    border-top: 1px solid #a0a0a0;
`;

const FerramentasRow = styled.div`
    flex: none;
    height: ${({ $h }) => $h}px;
    display: flex;
    align-items: center;
    padding-left: 5px;
    overflow: hidden;
    background: #ececec;
    border-left: 1px solid #fff;
    border-bottom: 1px solid #fff;
    ${({ $topo }) => $topo && 'border-top: 1px solid #a0a0a0;'}
    box-shadow: inset 0 -1px #a0a0a0;
`;

const Alca = styled.span`
    flex: none;
    width: 2px;
    height: 18px;
    margin-right: 3px;
    border-right: 1px solid #a0a0a0;
    border-left: 1px solid #fff;
`;

const FerramentaButton = styled.button`
    flex: none;
    width: ${({ $w }) => $w}px;
    height: 20px;
    display: flex;
    align-items: center;
    justify-content: center;
    background: ${({ $marcado }) => ($marcado ? '#f5f5f5' : 'none')};
    ${({ $preso }) => $preso && `
        border-top: 1px solid #8c8c8c;
        border-left: 1px solid #8c8c8c;
        background: #f5f5f5;
    `}
`;

const LetraButton = styled.button`
    flex: none;
    width: 26px;
    font-size: 15px;
    line-height: 18px;
    color: ${({ $preto }) => ($preto ? '#000' : GRAY)};
`;

const Redondo = styled.span`
    display: inline-block;
    width: 17px;
    height: 17px;
    border: 1px solid ${GRAY};
    border-radius: 50%;
    font-size: 11px;
    line-height: 15px;
`;

const Combo = styled.div`
    flex: none;
    width: ${({ $w }) => $w}px;
    height: 18px;
    display: flex;
    align-items: center;
    padding: 0 4px 0 1px;
    border: 1px solid #a0a0a0;
    background: ${({ $off }) => ($off ? '#ececec' : '#fff')};

    select {
        flex: 1;
        min-width: 0;
        height: 16px;
        padding: 0 1px;
        border: none;
        appearance: none;
        background: none;
        color: ${({ $off }) => ($off ? '#888' : '#000')};
        opacity: 1;
    }
`;

const TT = styled.span`
    padding-left: 2px;
    font-size: 9px;

    b + b {
        font-size: 13px;
    }
`;

const Traco = styled.span`
    flex: 1;
    height: 1px;
    margin: 0 8px 0 4px;
    background: #a0a0a0;
`;

const TextoButton = styled.button`
    flex: none;
    display: flex;
    align-items: center;
    gap: ${({ $gap = 1 }) => $gap}px;
    padding: 0 ${({ $pad = 5 }) => $pad}px;
    color: ${({ $off }) => ($off ? '#999' : '#000')};
`;

const NoMark = styled.span`
    font-size: 11px;
`;

const Vermelho = styled.b`
    width: 16px;
    font-size: 15px;
    line-height: 18px;
    color: #e01818;
`;

const FolhaArea = styled.div`
    position: relative;
    flex: 1;
    min-height: 0;
    overflow: hidden;
    border-top: 1px solid #707070;
    border-left: 1px solid #707070;
    background: #f0f0f0;
`;

const Folha = styled.table`
    width: 736px;
    table-layout: fixed;
    border-collapse: separate;
    border-spacing: 0;
    font-family: "Noto Sans CJK SC", sans-serif;
    font-size: 13px;
    line-height: 13px;
    background: ${CINZA};

    td, th {
        padding: 0;
    }
`;

const Linha = styled.tr`
    height: ${({ $h }) => $h}px;
`;

const ColHead = styled.th`
    border-right: 1px solid #8c8c8c;
    background: #f4f4f4;
    overflow: hidden;

    span {
        display: flex;
        justify-content: center;
        width: 8px;
        margin: 0 1px;
        overflow: hidden;
        font-family: "Liberation Mono", monospace;
        font-size: 13px;
        font-weight: bold;
    }
`;

const Canto = styled.th`
    border-right: 1px solid #8c8c8c;
    border-bottom: 1px solid #8c8c8c;
    background: #f0f0f0;
    vertical-align: bottom;

    svg {
        margin-left: auto;
    }
`;

const RowHead = styled.th`
    border-right: 1px solid #8c8c8c;
    border-bottom: 1px solid #a0a0a0;
    background: #f0f0f0;
    font-family: "Liberation Serif", serif;
    font-weight: normal;
`;

const Recorte = styled.div`
    height: ${({ $h }) => $h}px;
    overflow: hidden;
`;

const Selecao = styled.td`
    position: relative;
    border-top: 2px solid #1c1c20;
    border-bottom: 3px solid #1c1c20;
    background: #e4e4e4;
`;

const Puxador = styled.span`
    position: absolute;
    right: -3px;
    bottom: -4px;
    width: 5px;
    height: 5px;
    background: #1c1c20;
`;

const Borda = styled.td`
    background: ${CINZA};
    border-right: ${({ $tan }) => ($tan ? '1px solid #cfcbc2' : '2px solid #000')};
`;

const Topo = styled.td`
    background: #e4e4e4;
    border-bottom: 2px solid #000;
`;

const Titulo = styled.td`
    background: ${CINZA};
    border-bottom: 1px solid #cfcbc2;
    border-right: 1px solid #cfcbc2;
    font-size: 20px;
    line-height: 24px;
    text-align: center;
`;

const tracos = {
    tan: '1px solid #cfcbc2',
    grossa: '2px solid #000',
};

const Celula = styled.td`
    background: ${({ $bg }) => $bg};
    border-right: ${({ $right }) => tracos[$right] || '1px solid #000'};
    border-bottom: ${({ $bottom }) => tracos[$bottom] || '1px solid #000'};
    text-align: ${({ $left }) => ($left ? 'left' : 'center')};
    white-space: pre-line;

    && {
        padding-left: ${({ $left }) => ($left ? 3 : 0)}px;
        padding-right: ${({ $recuo }) => ($recuo ? 12 : 0)}px;
    }
`;

const CamadaFolha = styled.svg`
    position: absolute;
    left: 139px;
    top: 74px;
    pointer-events: none;
`;
